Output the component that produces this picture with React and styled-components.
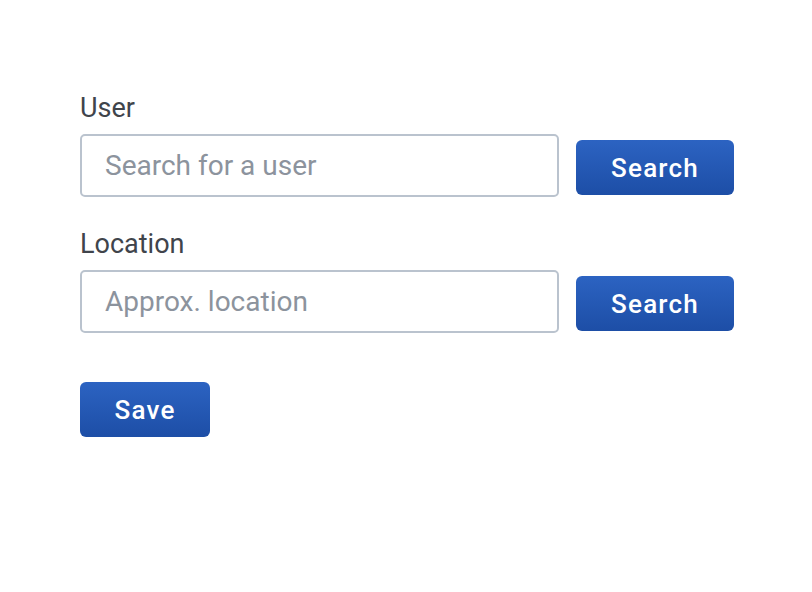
import styled, { createGlobalStyle } from "styled-components";

const GlobalStyle = createGlobalStyle`
  body {
    margin: 0;
    background: #ffffff;
    font-family: Roboto, "Liberation Sans", sans-serif;
  }
`;

const Page = styled.div`
  display: flex;
  flex-direction: column;
  align-items: flex-start;
  padding: 92px 0 0 80px;
`;

const Field = styled.div`
  display: flex;
  flex-direction: column;
  margin-bottom: 31px;
`;

const Label = styled.label`
  font-size: 27px;
  line-height: 32px;
  color: #40444b;
  margin-bottom: 10px;
`;

const Row = styled.div`
  display: flex;
  align-items: flex-start;
  gap: 17px;
`;

const Input = styled.input`
  box-sizing: border-box;
  width: 479px;
  height: 63px;
  padding: 0 23px;
  border: 2px solid #bac3ce;
  border-radius: 5px;
  font-family: Roboto, "Liberation Sans", sans-serif;
  font-size: 28px;
  color: #3b3f46;
  outline: none;

  &::placeholder {
    color: #8c939d;
  }
`;

const Button = styled.button`
  box-sizing: border-box;
  width: ${(p) => p.$width}px;
  height: 55px;
  margin-top: ${(p) => p.$offset || 0}px;
  border: none;
  border-radius: 6px;
  background: linear-gradient(#2c63c2, #1d4ea6);
  color: #ffffff;
  font-family: Roboto, "Liberation Sans", sans-serif;
  font-size: 26px;
  font-weight: 500;
  letter-spacing: 1.2px;
  cursor: pointer;
`;

const Actions = styled.div`
  margin-top: 18px;
`;

const App = () => {
  return (
    <>
      <GlobalStyle />
      <Page>
        <Field>
          <Label>User</Label>
          <Row>
            <Input placeholder="Search for a user" />
            <Button $width={158} $offset={6}>Search</Button>
          </Row>
        </Field>
        <Field>
          <Label>Location</Label>
          <Row>
            <Input placeholder="Approx. location" />
            <Button $width={158} $offset={6}>Search</Button>
          </Row>
        </Field>
        <Actions>
          <Button $width={130}>Save</Button>
        </Actions>
      </Page>
    </>
  );
};

export default App;
